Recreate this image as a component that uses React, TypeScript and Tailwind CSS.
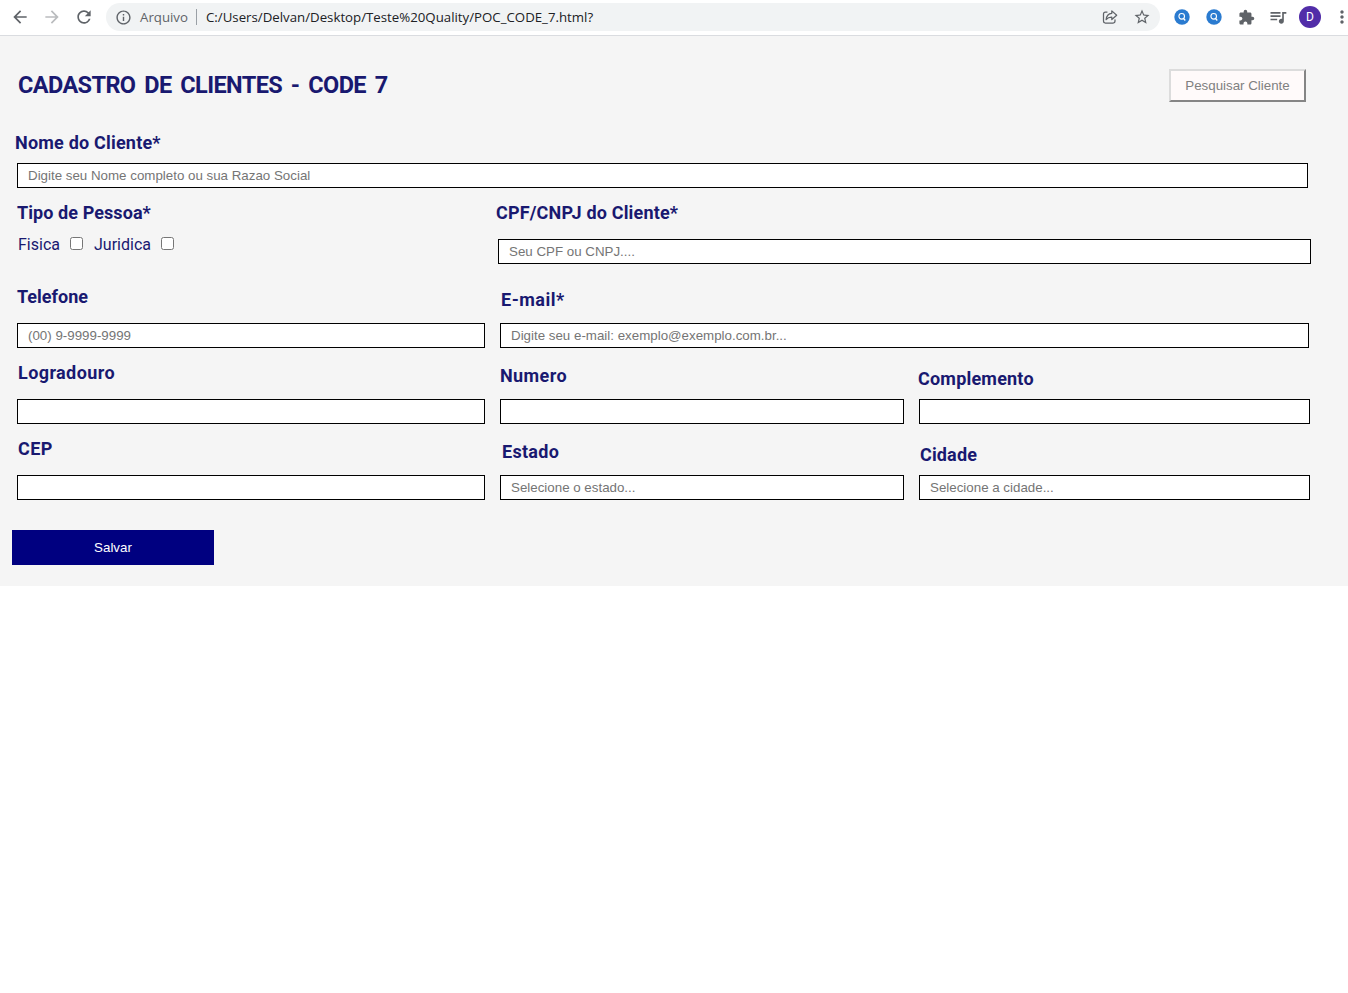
import React from "react";
import {
  MdArrowBack,
  MdArrowForward,
  MdExtension,
  MdInfoOutline,
  MdMoreVert,
  MdQueueMusic,
  MdRefresh,
  MdStarBorder,
} from "react-icons/md";

function ShareIcon() {
  return (
    <svg width="16" height="16" viewBox="0 0 16 16" fill="none" stroke="#5f6368" strokeWidth="1.25" strokeLinejoin="round" strokeLinecap="round">
      <path d="M5 3H3.4C2.3 3 1.500 3.800 1.500 4.900v7.200c0 1.100.8 1.900 1.900 1.900h7.700c1.100 0 1.900-.8 1.900-1.900v-1.300" />
      <path d="M9.800 1.900 14.700 6.200 9.800 10.500V8.200C7.300 8.100 5.600 8.900 4.100 10.700 4.400 7.100 6.300 4.600 9.800 4.300Z" />
    </svg>
  );
}

function SearchBadge() {
  return (
    <svg width="16" height="16" viewBox="0 0 16 16" fill="none">
      <circle cx="8" cy="8" r="7.700" fill="#2a7bd0" />
      <circle cx="7.700" cy="7.300" r="2.800" stroke="#fff" strokeWidth="1.100" />
      <path d="m9.300 9.300 2 2.200" stroke="#fff" strokeWidth="1.300" />
    </svg>
  );
}

function Toolbar() {
  return (
    <header className="flex h-9 items-center border-b border-[#dadce0] bg-white pb-px text-[#5f6368]">
      <MdArrowBack className="ml-[10px] size-5 shrink-0" />
      <MdArrowForward className="ml-3 size-5 shrink-0 text-[#babcbe]" />
      <MdRefresh className="ml-3 size-5 shrink-0" />
      <div className="ml-3 flex h-7 w-[1054px] shrink-0 items-center rounded-full bg-[#f1f3f4] font-['Open_Sans',sans-serif] text-[13.25px]">
        <MdInfoOutline className="ml-[9px] size-[17px]" />
        <span className="ml-[8px] w-12 pt-px whitespace-nowrap">Arquivo</span>
        <span className="ml-2 h-4 w-px bg-[#9aa0a6]" />
        <span className="ml-[9px] pt-px whitespace-nowrap text-[#202124]">
          C:/Users/Delvan/Desktop/Teste%20Quality/POC_CODE_7.html?
        </span>
        <span className="ml-auto">
          <ShareIcon />
        </span>
        <MdStarBorder className="mr-[9px] ml-[15px] size-[18px]" />
      </div>
      <span className="ml-[14px]"><SearchBadge /></span>
      <span className="ml-4"><SearchBadge /></span>
      <MdExtension className="ml-4 size-[17px] shrink-0" />
      <MdQueueMusic className="ml-[13px] size-5 shrink-0" />
      <span className="ml-[11px] flex size-[22px] shrink-0 items-center justify-center rounded-full bg-[#512da8] font-['Roboto',sans-serif] text-[12px] text-white">
        D
      </span>
      <MdMoreVert className="ml-[11px] size-5 shrink-0" />
    </header>
  );
}

function Label({ children, className }: { children: React.ReactNode; className: string }) {
  return (
    <span className={`block h-[22px] font-['Roboto',sans-serif] text-[18px] leading-[22px] font-bold whitespace-nowrap text-[#191970] ${className}`}>
      {children}
    </span>
  );
}

type FieldProps = { label: string; labelClass: string; width: string; placeholder?: string };

function Field({ label, labelClass, width, placeholder }: FieldProps) {
  return (
    <label className={`flex shrink-0 flex-col ${width}`}>
      <Label className={labelClass}>{label}</Label>
      <input
        placeholder={placeholder}
        className="h-[25px] w-full border border-black bg-white px-[10px] font-['Liberation_Sans',Arial,sans-serif] text-[13.333px] placeholder:text-[#757575]"
      />
    </label>
  );
}

function Check({ label, className }: { label: string; className: string }) {
  return (
    <label className="flex items-start">
      <span className={className}>{label}</span>
      <input type="checkbox" className="mt-[3px] size-[13px]" />
    </label>
  );
}

export default function App() {
  return (
    <div className="min-h-[993px] w-[1348px] overflow-hidden bg-white">
      <Toolbar />
      <form className="h-[550px] bg-[#f5f5f5] pl-[17px]">
        <div className="flex h-24 justify-between pr-[42px]">
          <h1 className="mt-[34px] ml-px font-['Roboto',sans-serif] text-[23.5px] leading-[30px] font-bold tracking-[-0.6px] [word-spacing:3.5px] whitespace-nowrap text-[#191970]">
            CADASTRO DE CLIENTES - CODE 7
          </h1>
          <button
            type="button"
            className="mt-[33px] h-[33px] w-[137px] border-2 border-t-[#dcdcdc] border-r-[#858585] border-b-[#858585] border-l-[#dcdcdc] bg-[#fffafa] font-['Liberation_Sans',Arial,sans-serif] text-[13.333px] text-[#808080]"
          >
            Pesquisar Cliente
          </button>
        </div>
        <div className="flex h-14 items-end">
          <Field label="Nome do Cliente*" labelClass="-ml-[2px] mb-[9px] tracking-[0.2px]" width="w-[1291px]" placeholder="Digite seu Nome completo ou sua Razao Social" />
        </div>
        <div className="flex h-[76px] items-end">
          <div className="flex h-[62px] w-[481px] flex-col">
            <Label className="tracking-[0.08px]">Tipo de Pessoa*</Label>
            <div className="mt-[10px] ml-px flex h-5 font-['Roboto',sans-serif] text-[16px] leading-[22px] text-[#191970]">
              <Check label="Fisica" className="w-[52px]" />
              <Check label="Juridica" className="ml-[11px] w-[67px]" />
            </div>
          </div>
          <Field label="CPF/CNPJ do Cliente*" labelClass="-ml-[2px] mb-[15px] tracking-[0.17px]" width="w-[813px]" placeholder="Seu CPF ou CNPJ...." />
        </div>
        <div className="flex h-[84px] items-end gap-[15px]">
          <Field label="Telefone" labelClass="mb-[15px]" width="w-[468px]" placeholder="(00) 9-9999-9999" />
          <Field label="E-mail*" labelClass="ml-px mb-3 tracking-[0.5px]" width="w-[809px]" placeholder="Digite seu e-mail: exemplo@exemplo.com.br..." />
        </div>
        <div className="flex h-[76px] items-end gap-[15px]">
          <Field label="Logradouro" labelClass="ml-px mb-[15px] tracking-[0.4px]" width="w-[468px]" />
          <Field label="Numero" labelClass="mb-3 tracking-[0.4px]" width="w-[404px]" />
          <Field label="Complemento" labelClass="-ml-px mb-[9px] tracking-[0.2px]" width="w-[391px]" />
        </div>
        <div className="flex h-[76px] items-end gap-[15px]">
          <Field label="CEP" labelClass="ml-px mb-[15px] tracking-[0.4px]" width="w-[468px]" />
          <Field label="Estado" labelClass="ml-[2px] mb-3 tracking-[0.3px]" width="w-[404px]" placeholder="Selecione o estado..." />
          <Field label="Cidade" labelClass="ml-px mb-[9px] tracking-[0.15px]" width="w-[391px]" placeholder="Selecione a cidade..." />
        </div>
        <button
          type="button"
          className="mt-[30px] -ml-[5px] h-[35px] w-[202px] bg-[#000080] font-['Liberation_Sans',Arial,sans-serif] text-[13.333px] text-white"
        >
          Salvar
        </button>
      </form>
    </div>
  );
}
